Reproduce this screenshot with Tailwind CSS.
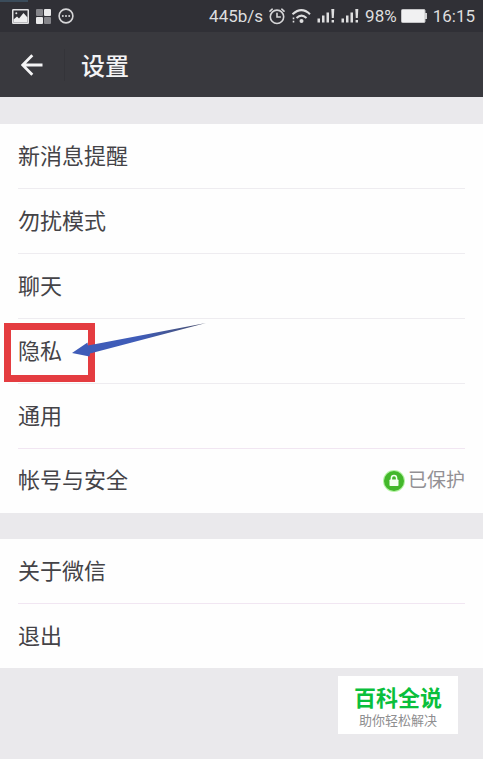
<!DOCTYPE html>
<html lang="zh-CN">
<head>
    <meta charset="UTF-8">
    <meta name="viewport" content="width=device-width, initial-scale=1.0">
    <title>设置</title>
    <script src="https://cdn.jsdelivr.net/npm/@tailwindcss/browser@4"></script>
</head>
<body class="relative min-h-screen bg-[#eae9ec] font-['Roboto','Noto_Sans_CJK_SC',sans-serif] text-[#444347]">
    <!-- Status bar -->
    <div class="relative flex h-8 items-center justify-between bg-[#303036] pl-3 pr-2 text-[17px] leading-5 text-[#dededf]">
        <div class="absolute left-0 top-0 h-[2px] w-7 bg-[#3b4c5b]"></div>
        <div class="flex items-center gap-[7px]">
            <svg class="h-[15px] w-[17px]" viewBox="0 0 17 15" fill="none">
                <rect x="0.75" y="0.75" width="15.5" height="13.5" rx="0.5" stroke="#e2e2e4" stroke-width="1.5"/>
                <path d="M1.5 13.5V10.5L5 7.5L7 9.5L11.5 4L15.5 8.5V13.5Z" fill="#eeeeef"/>
                <circle cx="4.3" cy="4.3" r="1" fill="#e2e2e4"/>
            </svg>
            <svg class="h-[15px] w-[15px]" viewBox="0 0 15 15">
                <rect width="7" height="7" rx="1" fill="#85858a"/>
                <rect x="8" width="7" height="7" rx="1" fill="#eaeaeb"/>
                <rect y="8" width="7" height="7" rx="1" fill="#eaeaeb"/>
                <rect x="8" y="8" width="7" height="7" rx="1" fill="#85858a"/>
            </svg>
            <svg class="h-4 w-4" viewBox="0 0 16 16" fill="none">
                <circle cx="8" cy="8" r="6.9" stroke="#d6d6d8" stroke-width="1.6"/>
                <g fill="#d6d6d8">
                    <circle cx="4.8" cy="8" r="1"/>
                    <circle cx="8" cy="8" r="1"/>
                    <circle cx="11.2" cy="8" r="1"/>
                </g>
            </svg>
        </div>
        <div class="flex items-center gap-[6px]">
            <span>445b/s</span>
            <svg class="h-[17px] w-4" viewBox="0 0 16 17" fill="none" stroke="#d6d6d8" stroke-width="1.6" stroke-linecap="round">
                <circle cx="8" cy="8.8" r="6.7"/>
                <path d="M8 5.3V9H11.3M1 3.2L3.2 1.2M15 3.2L12.8 1.2"/>
            </svg>
            <svg class="h-4 w-5" viewBox="0 0 20 16" fill="none" stroke="#dededf" stroke-width="2">
                <path d="M1.5 6.2Q10.5 -2 19 6.2M5.5 10Q10.5 5.2 15.5 10"/>
                <circle cx="10.5" cy="13" r="2" fill="#dededf" stroke="none"/>
                <path d="M2.5 9.5V11.2M2.5 12.8V14.5" stroke-width="1.6"/>
            </svg>
            <svg class="h-[14px] w-[18px]" viewBox="0 0 18 14" fill="#dededf">
                <path d="M0.5 9.5H3V13.5H0.5ZM5 6.5H7.5V13.5H5ZM9.5 3.5H12V13.5H9.5ZM14.3 0H17.3L16.8 9H14.8ZM14.6 11H17V13.5H14.6Z"/>
            </svg>
            <svg class="h-[14px] w-[18px]" viewBox="0 0 18 14" fill="#dededf">
                <path d="M0.5 9.5H3V13.5H0.5ZM5 6.5H7.5V13.5H5ZM9.5 3.5H12V13.5H9.5ZM14.3 0H17.3L16.8 9H14.8ZM14.6 11H17V13.5H14.6Z"/>
            </svg>
            <div class="flex items-center gap-1">
                <span>98%</span>
                <svg class="h-[14px] w-[26px]" viewBox="0 0 26 14">
                    <rect x="0.5" y="0.5" width="23.5" height="13" rx="1" fill="#f1f1f2" stroke="#c4c4c6"/>
                    <rect x="24" y="4" width="2" height="6" fill="#d0d0d2"/>
                </svg>
            </div>
            <span>16:15</span>
        </div>
    </div>

    <!-- Title bar -->
    <header class="flex h-[65px] items-center bg-[#39393e] text-[#f4f4f5]">
        <button type="button" aria-label="返回" class="flex h-full w-16 items-center justify-center">
            <svg class="h-[22px] w-[22px]" viewBox="0 0 22 22" fill="none" stroke="currentColor" stroke-width="2.8">
                <path d="M21.5 11H2M11.3 1.2L1.6 11L11.3 20.8"/>
            </svg>
        </button>
        <div class="h-8 w-px bg-[#343439]"></div>
        <h1 class="pl-4 pt-1 text-2xl font-medium">设置</h1>
    </header>

    <!-- Settings -->
    <main class="space-y-[26px] pt-[27px] text-[22px] leading-8">
        <ul class="bg-[#fefefe] px-[18px]">
            <li class="border-b border-[#eeecf0]"><a href="#" class="flex h-16 items-center pt-[2px]">新消息提醒</a></li>
            <li class="border-b border-[#eeecf0]"><a href="#" class="flex h-16 items-center pt-[2px]">勿扰模式</a></li>
            <li class="border-b border-[#eeecf0]"><a href="#" class="flex h-16 items-center pt-[2px]">聊天</a></li>
            <li class="relative border-b border-[#eeecf0]">
                <a href="#" class="flex h-16 items-center pt-[2px]">隐私</a>
                <div class="pointer-events-none absolute -left-[14px] top-1 h-[59px] w-[91px] border-7 border-[#e43c40]"></div>
                <svg class="pointer-events-none absolute left-[54px] top-1 h-9 w-[136px]" viewBox="0 0 136 36">
                    <defs>
                        <linearGradient id="arrow" x1="0" x2="1">
                            <stop offset="0.5" stop-color="#3f5cb8"/>
                            <stop offset="1" stop-color="#4a4f6b"/>
                        </linearGradient>
                    </defs>
                    <path d="M0 30L15.5 19.5L16 22.5L134 0L18 30.5L17.5 33.5Z" fill="url(#arrow)"/>
                </svg>
            </li>
            <li class="border-b border-[#f1e6f2]"><a href="#" class="flex h-16 items-center pt-[2px]">通用</a></li>
            <li>
                <a href="#" class="flex h-16 items-center justify-between">
                    <span>帐号与安全</span>
                    <span class="flex items-center gap-[3px] text-[19px] text-[#929094]">
                        <svg class="h-[22px] w-[22px]" viewBox="0 0 22 22">
                            <circle cx="11" cy="11" r="11" fill="#b4f3a3"/>
                            <circle cx="11" cy="11" r="10" fill="#43b72b"/>
                            <rect x="6.5" y="9.5" width="9" height="6.5" rx="0.8" fill="#f5fff2"/>
                            <path d="M8.4 10V8A2.6 2.6 0 0 1 13.6 8V10" fill="none" stroke="#f5fff2" stroke-width="1.5"/>
                        </svg>
                        已保护
                    </span>
                </a>
            </li>
        </ul>

        <ul class="bg-[#fefefe] px-[18px]">
            <li class="border-b border-[#f1e6f2]"><a href="#" class="flex h-16 items-center pt-[2px]">关于微信</a></li>
            <li><a href="#" class="flex h-16 items-center pt-[2px]">退出</a></li>
        </ul>
    </main>

    <div class="absolute bottom-[25px] right-[25px] bg-white px-4 pb-[7px] pt-2 text-center">
        <p class="text-[22px] font-bold leading-[30px] text-[#0abf3c]">百科全说</p>
        <p class="text-[13px] leading-[13px] text-[#8e8e90]">助你轻松解决</p>
    </div>
</body>
</html>
